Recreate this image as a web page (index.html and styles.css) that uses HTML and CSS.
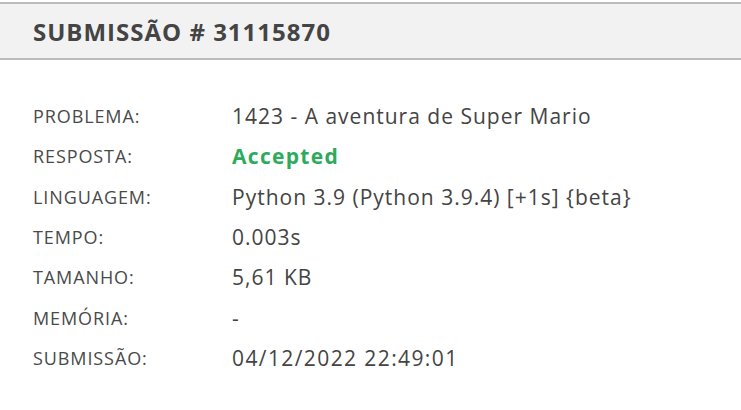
FILE: index.html
```html
<!DOCTYPE html>
<html lang="pt">
<head>
<meta charset="utf-8">
<title>Submissão</title>
<link rel="stylesheet" href="styles.css">
</head>
<body>
<div class="panel">
  <div class="panel-head"><h1 class="title">SUBMISSÃO # 31115870</h1></div>
  <dl class="details">
    <div class="row"><dt>PROBLEMA:</dt><dd>1423 - A aventura de Super Mario</dd></div>
    <div class="row"><dt>RESPOSTA:</dt><dd class="accepted">Accepted</dd></div>
    <div class="row"><dt>LINGUAGEM:</dt><dd>Python 3.9 (Python 3.9.4) [+1s] {beta}</dd></div>
    <div class="row"><dt>TEMPO:</dt><dd>0.003s</dd></div>
    <div class="row"><dt>TAMANHO:</dt><dd>5,61 KB</dd></div>
    <div class="row"><dt>MEMÓRIA:</dt><dd>-</dd></div>
    <div class="row"><dt>SUBMISSÃO:</dt><dd class="date">04/12/2022 22:49:01</dd></div>
  </dl>
</div>
</body>
</html>
```
FILE: styles.css
```css
html, body {
  margin: 0;
  padding: 0;
  background: #ffffff;
}
body {
  font-family: "Open Sans", "Noto Sans", sans-serif;
  color: #444444;
}
.panel {
  padding-top: 2px;
}
.panel-head {
  background: #f2f2f2;
  border-top: 2px solid #bbbbbb;
  border-bottom: 2px solid #bbbbbb;
  height: 54px;
  display: flex;
  align-items: center;
  padding-left: 33px;
}
.title {
  margin: 0;
  font-size: 24px;
  font-weight: 700;
  color: #444444;
  letter-spacing: 1px;
}
.details {
  margin: 36px 0 0 0;
  padding: 0 0 0 33px;
}
.row {
  display: grid;
  grid-template-columns: 199px 1fr;
  height: 40.3px;
  align-items: center;
}
dt {
  font-size: 18px;
  letter-spacing: 0.9px;
  color: #4a4a4a;
}
dd {
  margin: 0;
  font-size: 21px;
  letter-spacing: 1px;
  color: #444444;
}
.date {
  letter-spacing: 1.4px;
}
.accepted {
  color: #2eaa5c;
  font-weight: 700;
  letter-spacing: 1.3px;
}
```
